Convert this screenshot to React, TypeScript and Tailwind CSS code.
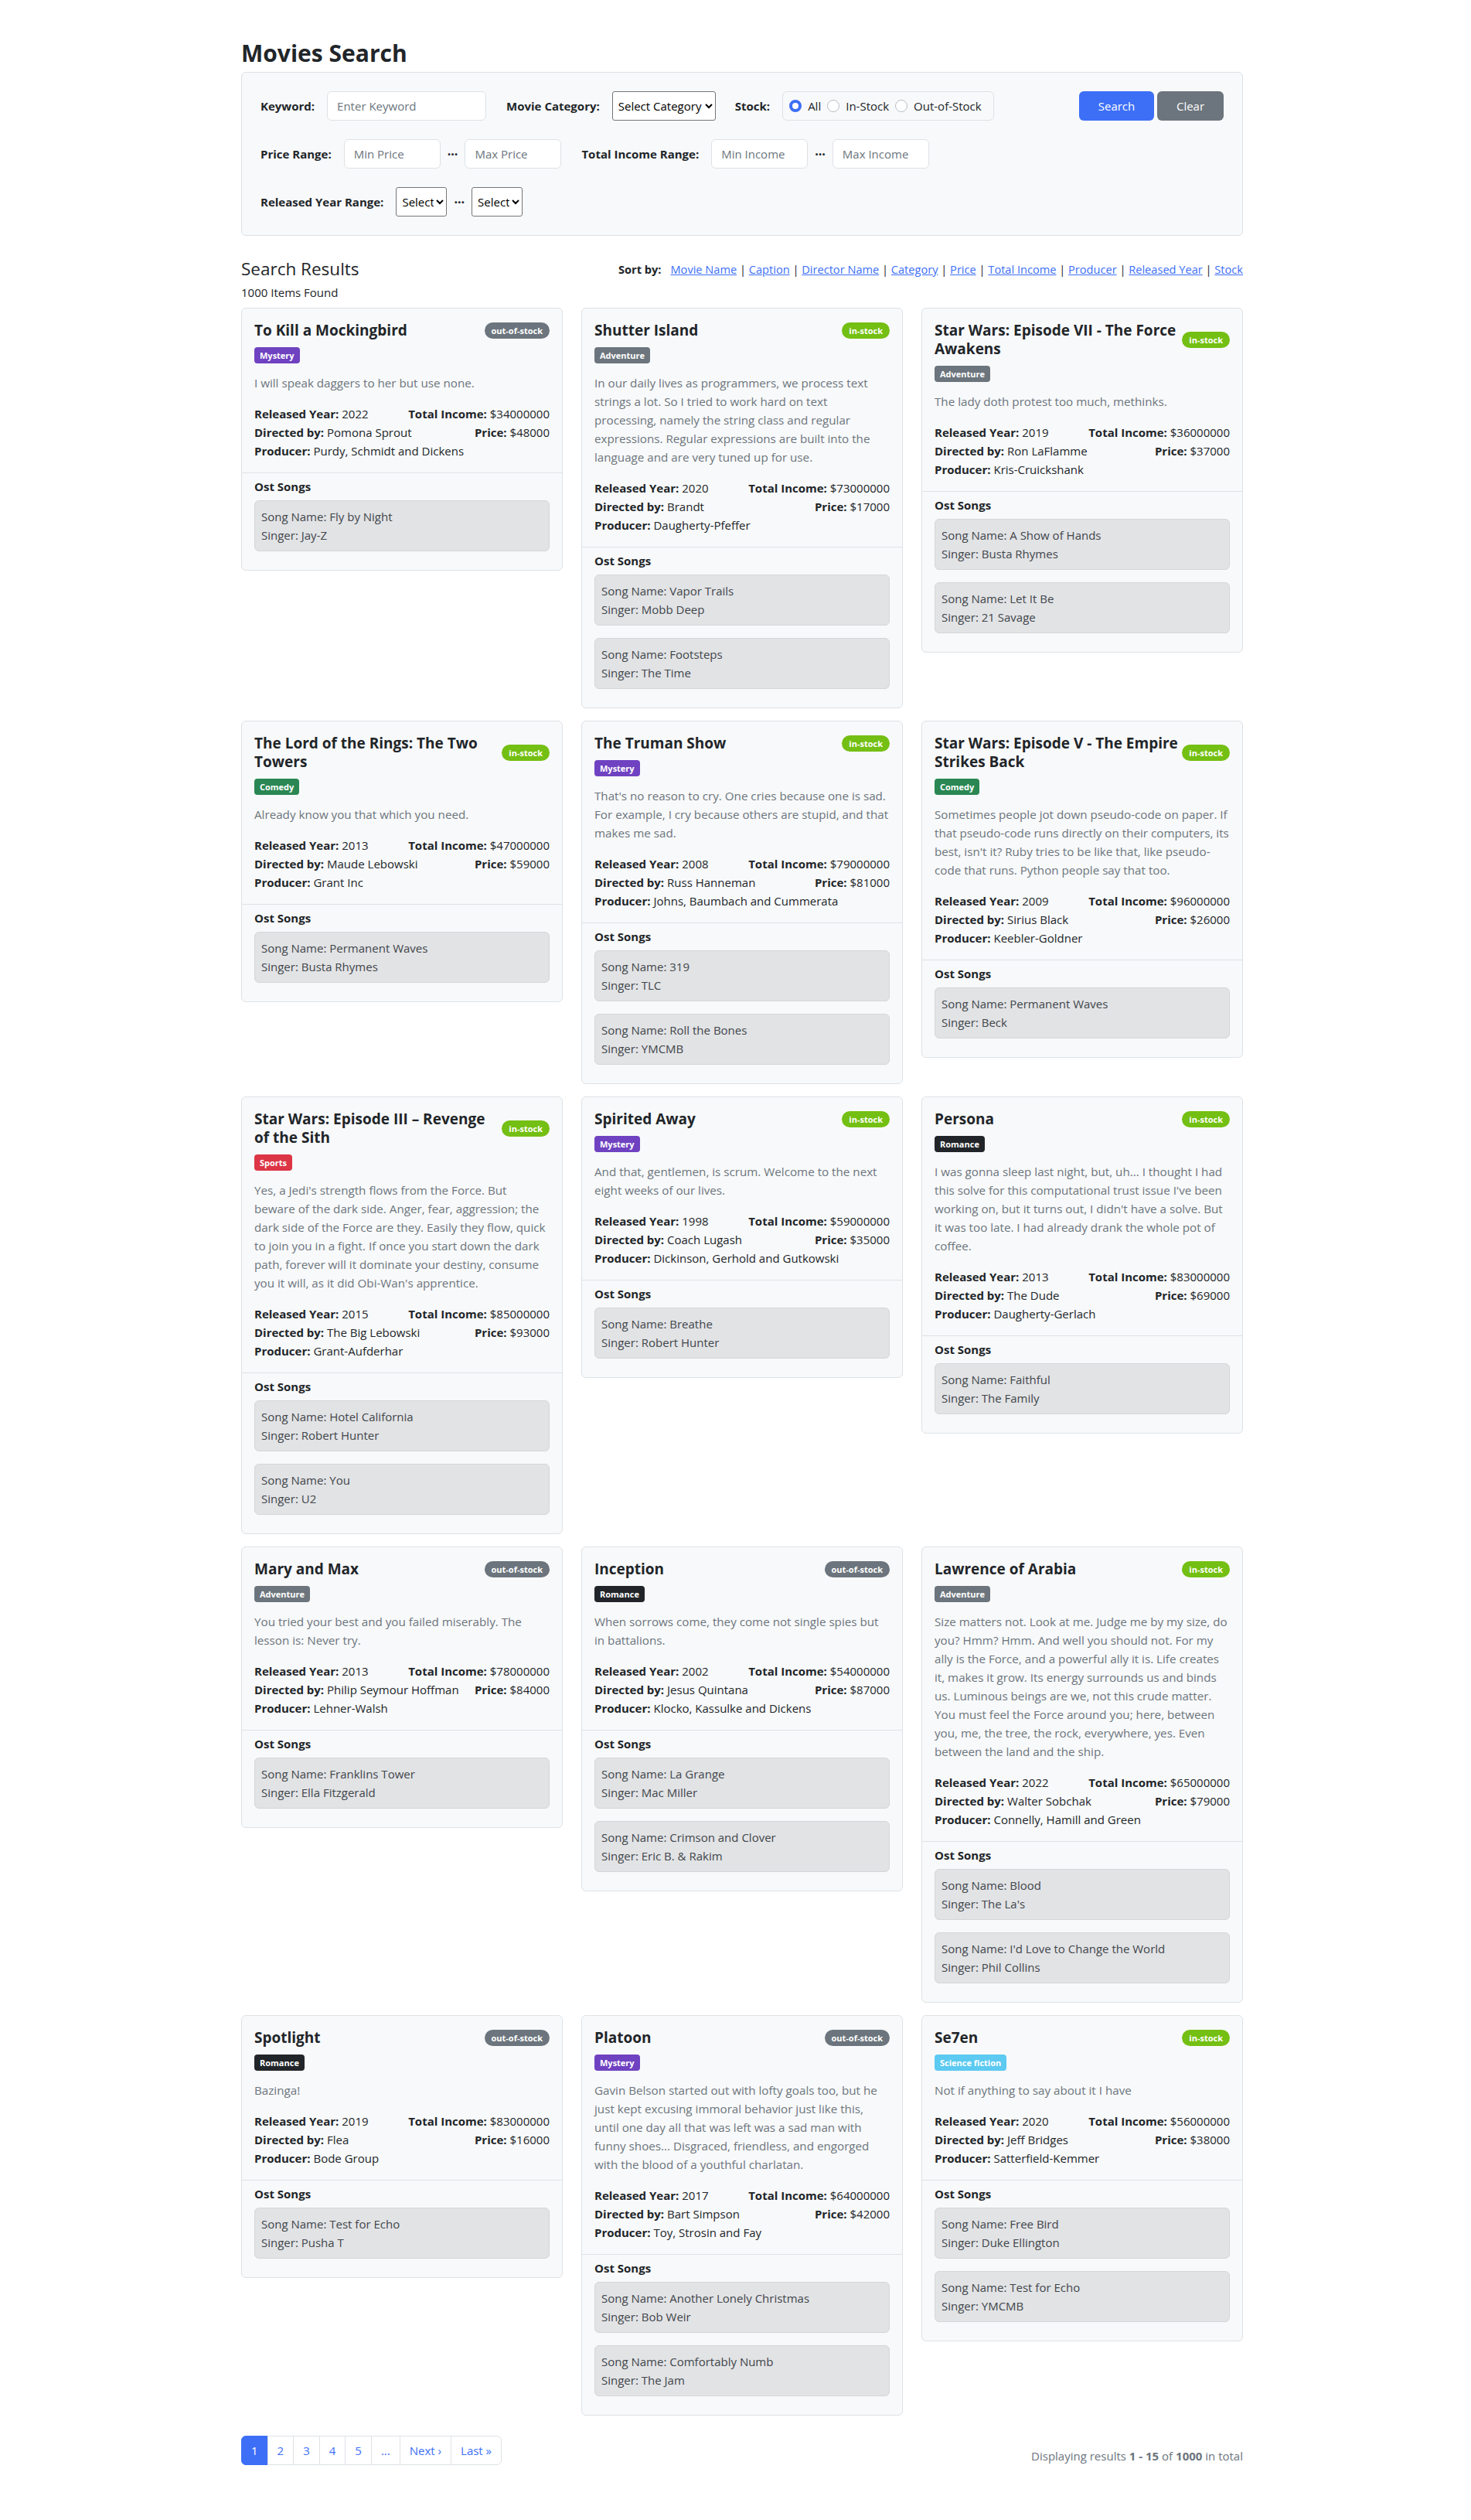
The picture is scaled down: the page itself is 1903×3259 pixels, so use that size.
import React from "react";

type Song = { name: string; singer: string };
type Movie = {
  title: string;
  inStock: boolean;
  category: string;
  caption: string;
  year: number;
  income: string;
  director: string;
  price: string;
  producer: string;
  songs: Song[];
};

const movies: Movie[] = [
  {
    title: "To Kill a Mockingbird",
    inStock: false,
    category: "Mystery",
    caption: "I will speak daggers to her but use none.",
    year: 2022,
    income: "$34000000",
    director: "Pomona Sprout",
    price: "$48000",
    producer: "Purdy, Schmidt and Dickens",
    songs: [{ name: "Fly by Night", singer: "Jay-Z" }],
  },
  {
    title: "Shutter Island",
    inStock: true,
    category: "Adventure",
    caption:
      "In our daily lives as programmers, we process text strings a lot. So I tried to work hard on text processing, namely the string class and regular expressions. Regular expressions are built into the language and are very tuned up for use.",
    year: 2020,
    income: "$73000000",
    director: "Brandt",
    price: "$17000",
    producer: "Daugherty-Pfeffer",
    songs: [
      { name: "Vapor Trails", singer: "Mobb Deep" },
      { name: "Footsteps", singer: "The Time" },
    ],
  },
  {
    title: "Star Wars: Episode VII - The Force Awakens",
    inStock: true,
    category: "Adventure",
    caption: "The lady doth protest too much, methinks.",
    year: 2019,
    income: "$36000000",
    director: "Ron LaFlamme",
    price: "$37000",
    producer: "Kris-Cruickshank",
    songs: [
      { name: "A Show of Hands", singer: "Busta Rhymes" },
      { name: "Let It Be", singer: "21 Savage" },
    ],
  },
  {
    title: "The Lord of the Rings: The Two Towers",
    inStock: true,
    category: "Comedy",
    caption: "Already know you that which you need.",
    year: 2013,
    income: "$47000000",
    director: "Maude Lebowski",
    price: "$59000",
    producer: "Grant Inc",
    songs: [{ name: "Permanent Waves", singer: "Busta Rhymes" }],
  },
  {
    title: "The Truman Show",
    inStock: true,
    category: "Mystery",
    caption:
      "That's no reason to cry. One cries because one is sad. For example, I cry because others are stupid, and that makes me sad.",
    year: 2008,
    income: "$79000000",
    director: "Russ Hanneman",
    price: "$81000",
    producer: "Johns, Baumbach and Cummerata",
    songs: [
      { name: "319", singer: "TLC" },
      { name: "Roll the Bones", singer: "YMCMB" },
    ],
  },
  {
    title: "Star Wars: Episode V - The Empire Strikes Back",
    inStock: true,
    category: "Comedy",
    caption:
      "Sometimes people jot down pseudo-code on paper. If that pseudo-code runs directly on their computers, its best, isn't it? Ruby tries to be like that, like pseudo-code that runs. Python people say that too.",
    year: 2009,
    income: "$96000000",
    director: "Sirius Black",
    price: "$26000",
    producer: "Keebler-Goldner",
    songs: [{ name: "Permanent Waves", singer: "Beck" }],
  },
  {
    title: "Star Wars: Episode III – Revenge of the Sith",
    inStock: true,
    category: "Sports",
    caption:
      "Yes, a Jedi's strength flows from the Force. But beware of the dark side. Anger, fear, aggression; the dark side of the Force are they. Easily they flow, quick to join you in a fight. If once you start down the dark path, forever will it dominate your destiny, consume you it will, as it did Obi-Wan's apprentice.",
    year: 2015,
    income: "$85000000",
    director: "The Big Lebowski",
    price: "$93000",
    producer: "Grant-Aufderhar",
    songs: [
      { name: "Hotel California", singer: "Robert Hunter" },
      { name: "You", singer: "U2" },
    ],
  },
  {
    title: "Spirited Away",
    inStock: true,
    category: "Mystery",
    caption: "And that, gentlemen, is scrum. Welcome to the next eight weeks of our lives.",
    year: 1998,
    income: "$59000000",
    director: "Coach Lugash",
    price: "$35000",
    producer: "Dickinson, Gerhold and Gutkowski",
    songs: [{ name: "Breathe", singer: "Robert Hunter" }],
  },
  {
    title: "Persona",
    inStock: true,
    category: "Romance",
    caption:
      "I was gonna sleep last night, but, uh... I thought I had this solve for this computational trust issue I've been working on, but it turns out, I didn't have a solve. But it was too late. I had already drank the whole pot of coffee.",
    year: 2013,
    income: "$83000000",
    director: "The Dude",
    price: "$69000",
    producer: "Daugherty-Gerlach",
    songs: [{ name: "Faithful", singer: "The Family" }],
  },
  {
    title: "Mary and Max",
    inStock: false,
    category: "Adventure",
    caption: "You tried your best and you failed miserably. The lesson is: Never try.",
    year: 2013,
    income: "$78000000",
    director: "Philip Seymour Hoffman",
    price: "$84000",
    producer: "Lehner-Walsh",
    songs: [{ name: "Franklins Tower", singer: "Ella Fitzgerald" }],
  },
  {
    title: "Inception",
    inStock: false,
    category: "Romance",
    caption: "When sorrows come, they come not single spies but in battalions.",
    year: 2002,
    income: "$54000000",
    director: "Jesus Quintana",
    price: "$87000",
    producer: "Klocko, Kassulke and Dickens",
    songs: [
      { name: "La Grange", singer: "Mac Miller" },
      { name: "Crimson and Clover", singer: "Eric B. & Rakim" },
    ],
  },
  {
    title: "Lawrence of Arabia",
    inStock: true,
    category: "Adventure",
    caption:
      "Size matters not. Look at me. Judge me by my size, do you? Hmm? Hmm. And well you should not. For my ally is the Force, and a powerful ally it is. Life creates it, makes it grow. Its energy surrounds us and binds us. Luminous beings are we, not this crude matter. You must feel the Force around you; here, between you, me, the tree, the rock, everywhere, yes. Even between the land and the ship.",
    year: 2022,
    income: "$65000000",
    director: "Walter Sobchak",
    price: "$79000",
    producer: "Connelly, Hamill and Green",
    songs: [
      { name: "Blood", singer: "The La's" },
      { name: "I'd Love to Change the World", singer: "Phil Collins" },
    ],
  },
  {
    title: "Spotlight",
    inStock: false,
    category: "Romance",
    caption: "Bazinga!",
    year: 2019,
    income: "$83000000",
    director: "Flea",
    price: "$16000",
    producer: "Bode Group",
    songs: [{ name: "Test for Echo", singer: "Pusha T" }],
  },
  {
    title: "Platoon",
    inStock: false,
    category: "Mystery",
    caption:
      "Gavin Belson started out with lofty goals too, but he just kept excusing immoral behavior just like this, until one day all that was left was a sad man with funny shoes... Disgraced, friendless, and engorged with the blood of a youthful charlatan.",
    year: 2017,
    income: "$64000000",
    director: "Bart Simpson",
    price: "$42000",
    producer: "Toy, Strosin and Fay",
    songs: [
      { name: "Another Lonely Christmas", singer: "Bob Weir" },
      { name: "Comfortably Numb", singer: "The Jam" },
    ],
  },
  {
    title: "Se7en",
    inStock: true,
    category: "Science fiction",
    caption: "Not if anything to say about it I have",
    year: 2020,
    income: "$56000000",
    director: "Jeff Bridges",
    price: "$38000",
    producer: "Satterfield-Kemmer",
    songs: [
      { name: "Free Bird", singer: "Duke Ellington" },
      { name: "Test for Echo", singer: "YMCMB" },
    ],
  },
];

const categoryColor: Record<string, string> = {
  Mystery: "bg-[#6f42c1]",
  Adventure: "bg-[#6c757d]",
  Comedy: "bg-[#2a8753]",
  Sports: "bg-[#dc3545]",
  Romance: "bg-[#212529]",
  "Science fiction": "bg-[#5ccaf1]",
};

const sortFields = [
  "Movie Name",
  "Caption",
  "Director Name",
  "Category",
  "Price",
  "Total Income",
  "Producer",
  "Released Year",
  "Stock",
];

function TextInput({ placeholder, width }: { placeholder: string; width: string }) {
  return (
    <input
      type="text"
      placeholder={placeholder}
      className={`${width} h-[38px] rounded-[6px] border border-[#dee2e6] bg-white px-3 text-[15px] placeholder:text-[#6c757d] outline-none`}
    />
  );
}

function Select({ label, width }: { label: string; width: string }) {
  return (
    <select
      className={`${width} h-[38px] rounded-[3px] border border-[#767676] bg-white pl-[3px] text-[15px] text-black`}
      defaultValue=""
    >
      <option value="">{label}</option>
    </select>
  );
}

function Dots() {
  return <span className="mx-[9px] text-[16px] font-bold leading-none">···</span>;
}

function Radio({ label, checked }: { label: string; checked?: boolean }) {
  return (
    <label className="flex items-center gap-2">
      <input
        type="radio"
        name="stock"
        defaultChecked={checked}
        className="h-4 w-4 appearance-none rounded-full border border-[#b9bec4] bg-white checked:border-[4px] checked:border-[#3d6ff6]"
      />
      <span>{label}</span>
    </label>
  );
}

function MovieCard({ movie }: { movie: Movie }) {
  return (
    <div className="rounded-[6px] border border-[#dee2e6] bg-[#f8f9fa]">
      <div className="p-4">
        <div className="flex items-center justify-between gap-[4px]">
          <h5 className="text-[19px] font-bold leading-[24px]">{movie.title}</h5>
          <span
            className={`shrink-0 rounded-full px-[9px] py-[5px] text-[11px] font-bold leading-[11px] text-white ${
              movie.inStock ? "bg-[#74bf13]" : "bg-[#6c757d]"
            }`}
          >
            {movie.inStock ? "in-stock" : "out-of-stock"}
          </span>
        </div>
        <span
          className={`mt-[10px] inline-block rounded-[4px] px-[7px] py-[5px] text-[11px] font-bold leading-[11px] text-white ${
            categoryColor[movie.category]
          }`}
        >
          {movie.category}
        </span>
        <p className="mt-[13px] text-[15.2px] text-[#6c757d]">{movie.caption}</p>
        <div className="mt-4">
          <div className="flex justify-between gap-2">
            <div>
              <b>Released Year:</b> {movie.year}
            </div>
            <div>
              <b>Total Income:</b> {movie.income}
            </div>
          </div>
          <div className="flex justify-between gap-2">
            <div>
              <b>Directed by:</b> {movie.director}
            </div>
            <div>
              <b>Price:</b> {movie.price}
            </div>
          </div>
          <div>
            <b>Producer:</b> {movie.producer}
          </div>
        </div>
      </div>
      <div className="border-t border-[#dee2e6] px-4 pt-2 pb-2">
        <h6 className="mb-2 font-bold leading-[19px]">Ost Songs</h6>
        {movie.songs.map((s) => (
          <div
            key={s.name}
            className="mb-4 rounded-[6px] border border-[#d3d6d8] bg-[#e2e3e5] p-2 text-[#41464b]"
          >
            <div>Song Name: {s.name}</div>
            <div>Singer: {s.singer}</div>
          </div>
        ))}
      </div>
    </div>
  );
}

export default function App() {
  const pages = ["1", "2", "3", "4", "5", "...", "Next ›", "Last »"];
  return (
    <div className="min-h-screen bg-white font-['Open_Sans',sans-serif] text-[15px] leading-[24px] text-[#212529]">
      <div className="ml-[312px] w-[1296px] pt-[50px] pb-[72px]">
        <h1 className="mb-[5px] text-[30px] font-bold leading-[38px]">Movies Search</h1>

        <div className="flex flex-col gap-6 rounded-[6px] border border-[#dee2e6] bg-[#f8f9fa] p-6">
          <div className="flex items-center">
            <span className="mr-4 font-bold">Keyword:</span>
            <TextInput placeholder="Enter Keyword" width="w-[206px]" />
            <span className="mr-4 ml-[26px] font-bold">Movie Category:</span>
            <Select label="Select Category" width="w-[134px]" />
            <span className="mr-4 ml-[25px] font-bold">Stock:</span>
            <div className="flex h-[38px] w-[274px] items-center gap-2 rounded-[6px] border border-[#dee2e6] px-2">
              <Radio label="All" checked />
              <Radio label="In-Stock" />
              <Radio label="Out-of-Stock" />
            </div>
            <div className="ml-auto flex gap-1">
              <button className="h-[38px] w-[97px] rounded-[6px] bg-[#3d6ff6] text-white">Search</button>
              <button className="h-[38px] w-[86px] rounded-[6px] bg-[#6c757d] text-white">Clear</button>
            </div>
          </div>

          <div className="flex items-center">
            <span className="mr-4 font-bold">Price Range:</span>
            <TextInput placeholder="Min Price" width="w-[125px]" />
            <Dots />
            <TextInput placeholder="Max Price" width="w-[125px]" />
            <span className="mr-4 ml-[26px] font-bold">Total Income Range:</span>
            <TextInput placeholder="Min Income" width="w-[125px]" />
            <Dots />
            <TextInput placeholder="Max Income" width="w-[125px]" />
          </div>

          <div className="flex items-center">
            <span className="mr-4 font-bold">Released Year Range:</span>
            <Select label="Select" width="w-[66px]" />
            <Dots />
            <Select label="Select" width="w-[66px]" />
          </div>
        </div>

        <div className="mt-[28px] flex items-center justify-between">
          <h2 className="text-[22.5px] leading-[29px]">Search Results</h2>
          <div className="text-[14.6px]">
            <b className="mr-3">Sort by:</b>
            {sortFields.map((f, i) => (
              <span key={f}>
                {i > 0 && " | "}
                <a href="#" className="text-[#3d6ff6] underline">
                  {f}
                </a>
              </span>
            ))}
          </div>
        </div>
        <div className="mt-1">1000 Items Found</div>

        <div className="mt-2 grid grid-cols-3 items-start gap-x-6 gap-y-4">
          {movies.map((m) => (
            <MovieCard key={m.title} movie={m} />
          ))}
        </div>

        <div className="mt-[26px] flex items-end justify-between">
          <ul className="flex">
            {pages.map((p, i) => (
              <li key={p}>
                <a
                  href="#"
                  className={`-ml-px flex h-[38px] items-center border px-3 ${
                    i === 0
                      ? "ml-0 rounded-l-[6px] border-[#3d6ff6] bg-[#3d6ff6] text-white"
                      : "border-[#dee2e6] bg-white text-[#3d6ff6]"
                  } ${i === pages.length - 1 ? "rounded-r-[6px]" : ""}`}
                >
                  {p}
                </a>
              </li>
            ))}
          </ul>
          <div className="text-[#6c757d]">
            Displaying results <b>1 - 15</b> of <b>1000</b> in total
          </div>
        </div>
      </div>
    </div>
  );
}
